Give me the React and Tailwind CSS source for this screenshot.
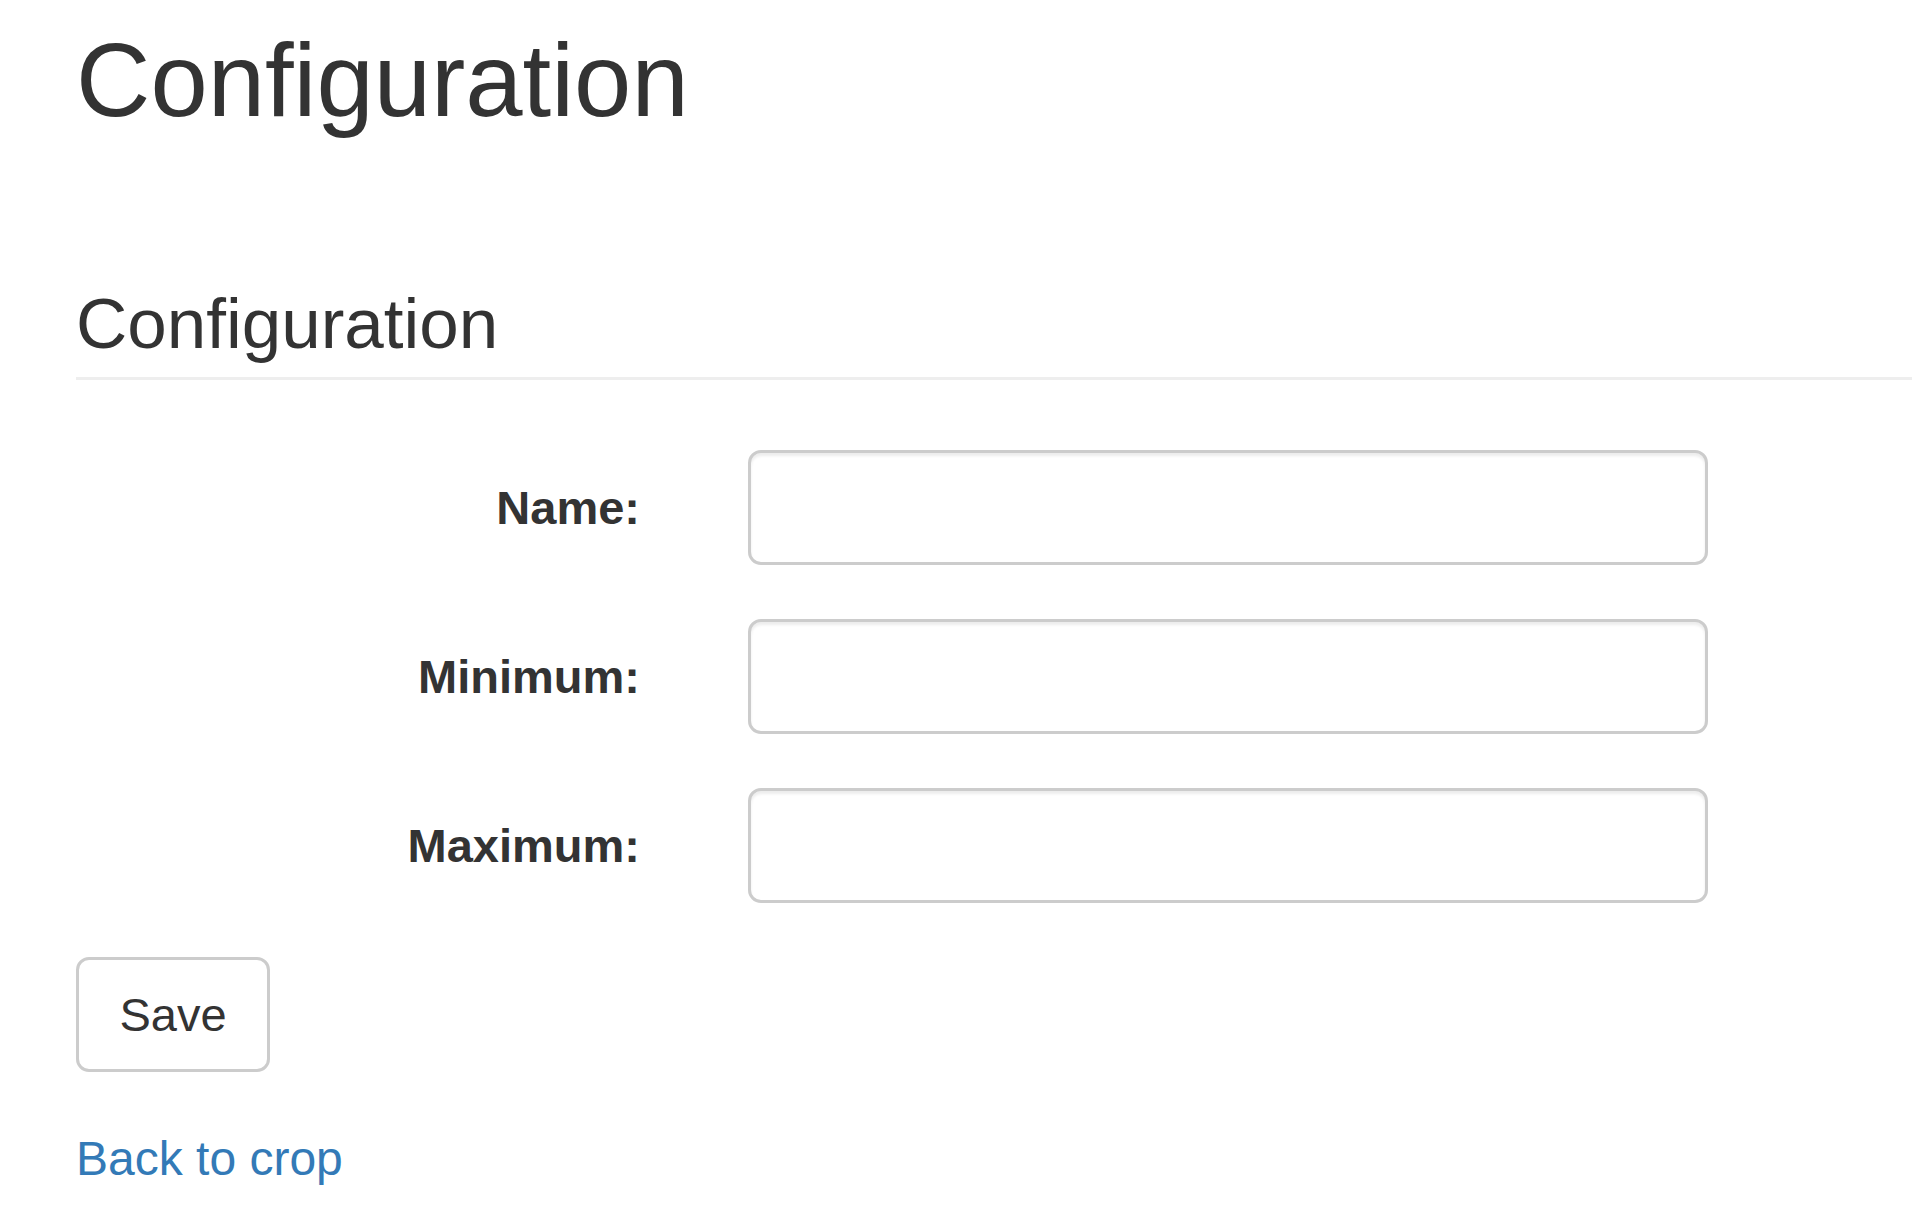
import React from "react";

const fields = ["Name:", "Minimum:", "Maximum:"];

export default function App() {
  return (
    <div className="min-h-screen bg-white pl-[76px] font-['Liberation_Sans',Arial,sans-serif] text-[#333333]">
      <h1 className="pt-[24px] text-[103px] font-normal leading-[1.1]">Configuration</h1>

      <div className="mt-[150px] border-b-[3px] border-[#eeeeee] pb-[14px]">
        <h3 className="text-[71px] font-normal leading-[1.1] -mt-[2px]">Configuration</h3>
      </div>

      <form className="mt-[70px] flex flex-col gap-[54px]" onSubmit={(e) => e.preventDefault()}>
        {fields.map((label) => (
          <div key={label} className="flex items-center">
            <label className="w-[564px] text-right text-[47px] font-bold leading-none">{label}</label>
            <input
              type="text"
              className="ml-[108px] h-[115px] w-[960px] rounded-[13px] border-[3px] border-[#cccccc] bg-white px-[36px] text-[45px] shadow-[inset_0_3px_3px_rgba(0,0,0,0.075)] outline-none"
            />
          </div>
        ))}
        <div>
          <button
            type="submit"
            className="h-[115px] w-[194px] rounded-[13px] border-[3px] border-[#cccccc] bg-white text-[47px] leading-none text-[#333333]"
          >
            Save
          </button>
        </div>
      </form>

      <a href="#" className="mt-[63px] block w-fit text-[48px] leading-none text-[#337ab7]">
        Back to crop
      </a>
    </div>
  );
}
